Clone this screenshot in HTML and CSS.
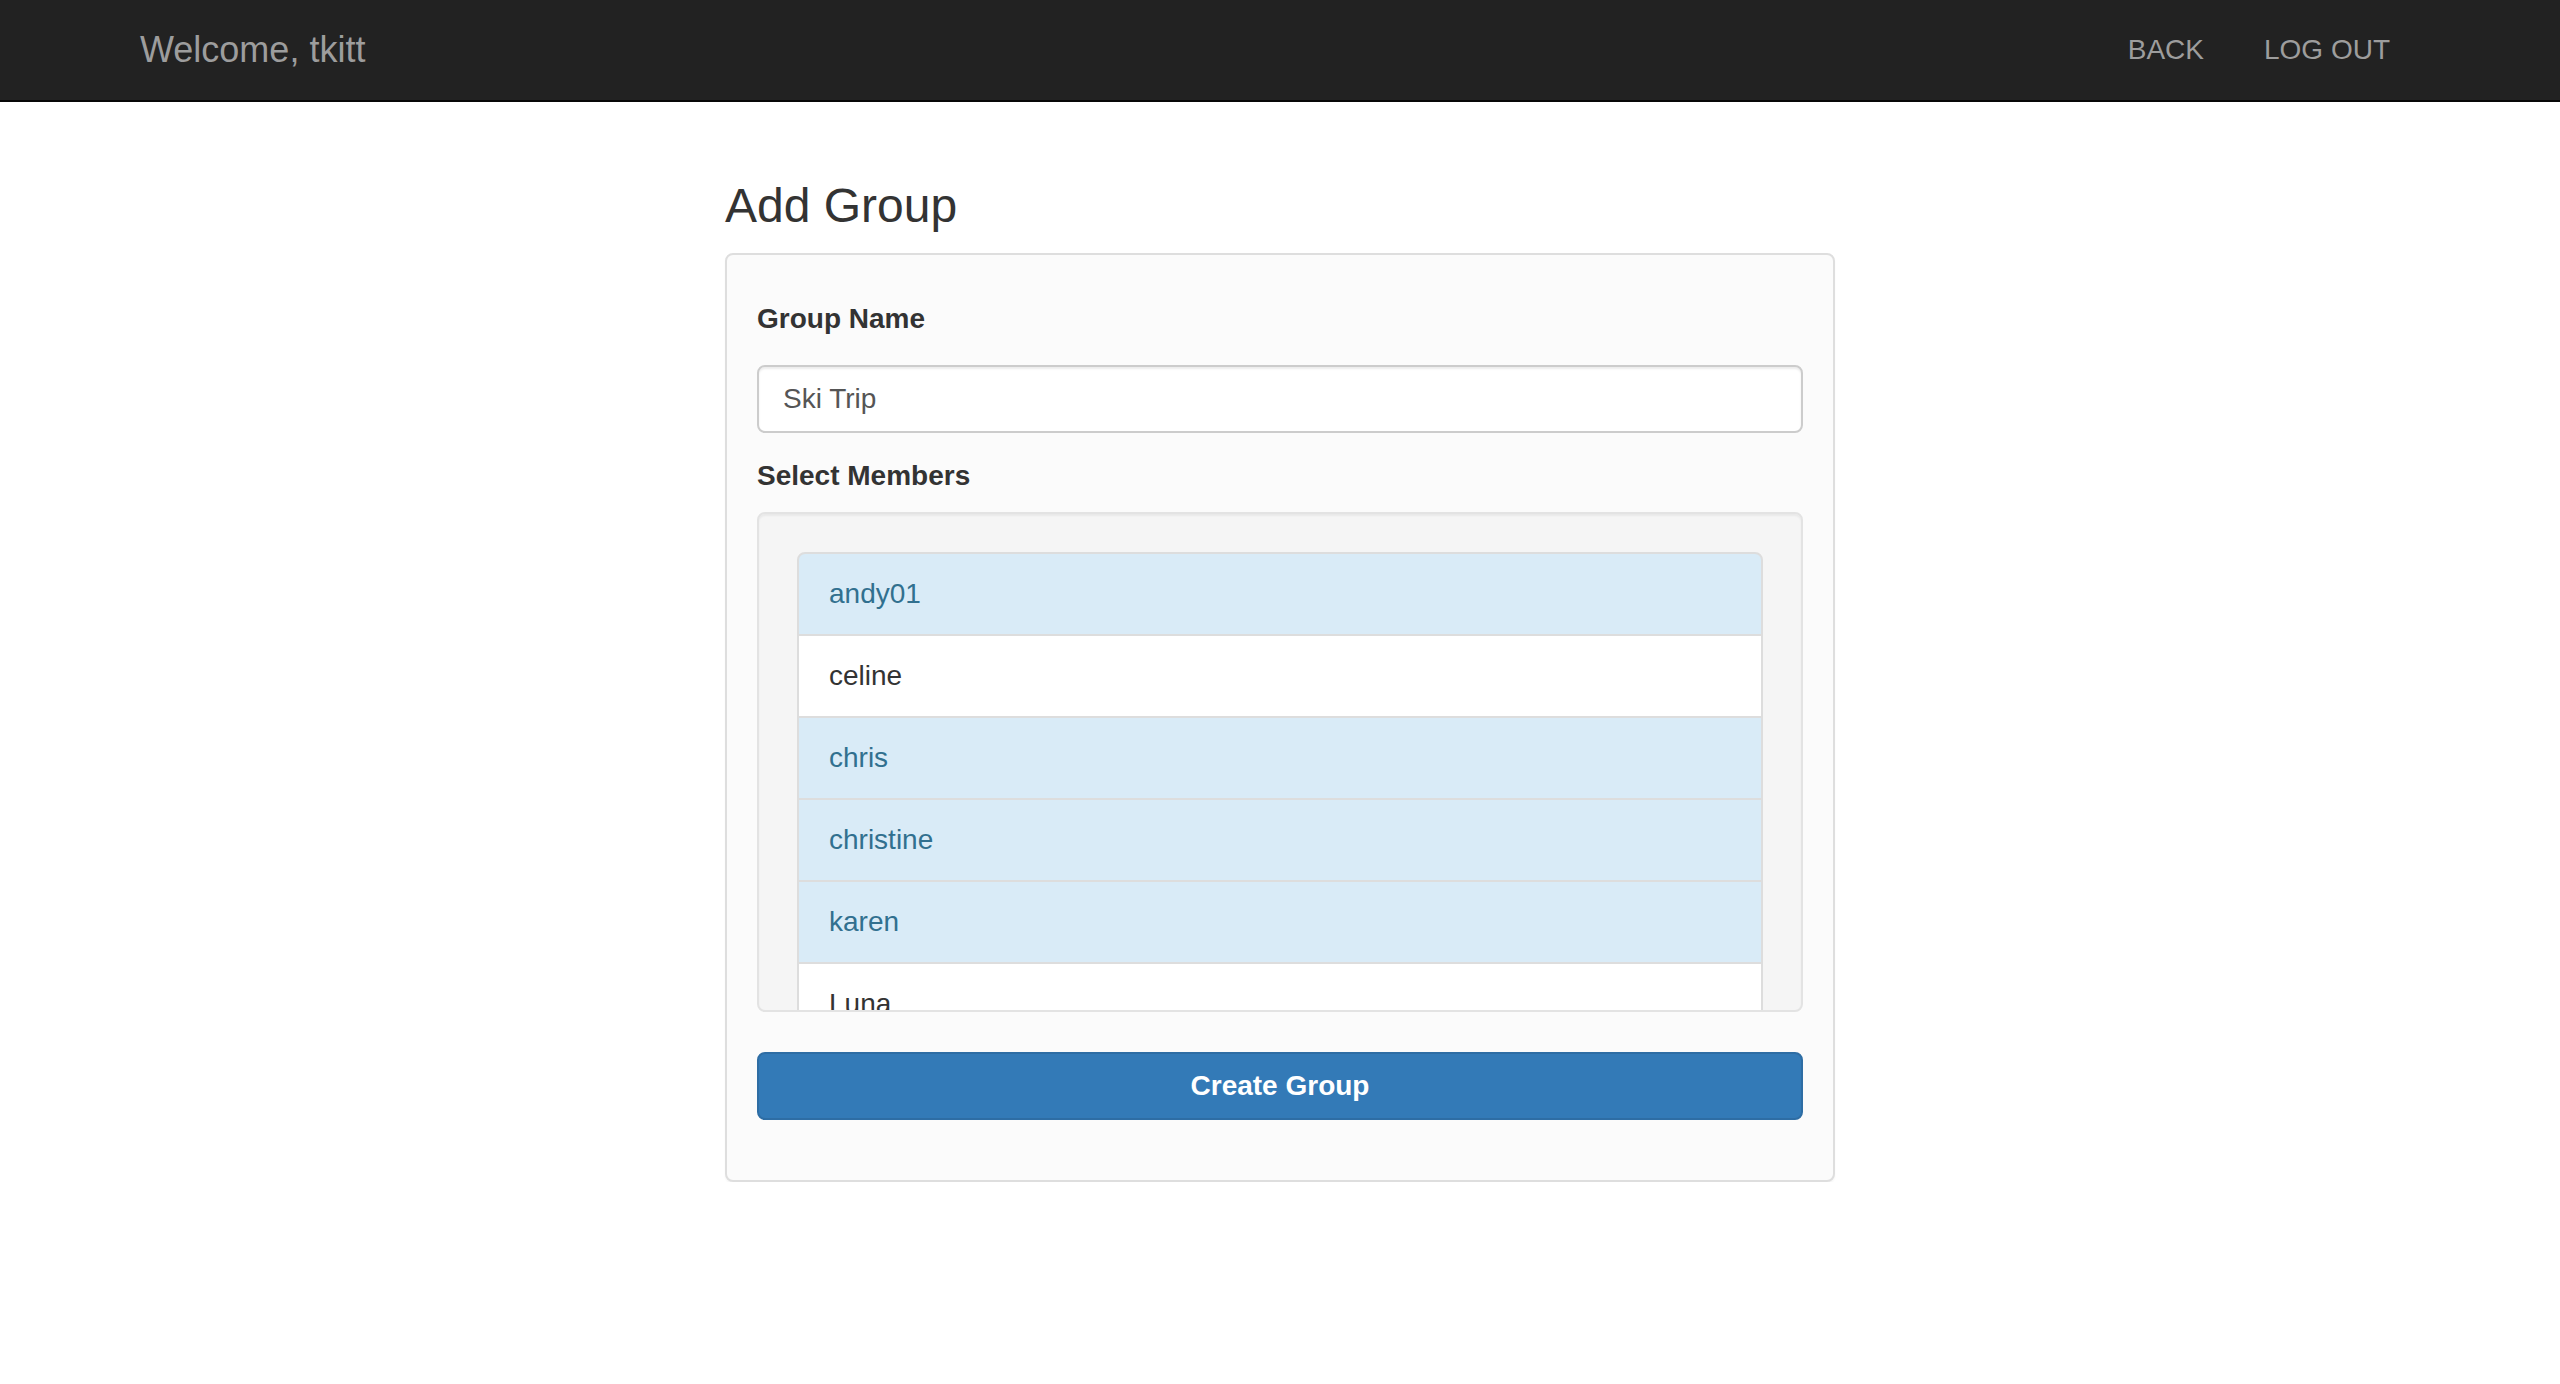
FILE: index.html
```html
<!DOCTYPE html>
<html lang="en">
<head>
<meta charset="utf-8">
<title>Add Group</title>
<link rel="stylesheet" href="styles.css">
</head>
<body>
<nav class="navbar">
  <div class="navbar-inner">
    <a class="brand" href="#">Welcome, tkitt</a>
    <ul class="nav-right">
      <li><a href="#">BACK</a></li>
      <li><a href="#">LOG OUT</a></li>
    </ul>
  </div>
</nav>
<main class="content">
  <div class="column">
    <h3 class="title">Add Group</h3>
    <form class="panel">
      <label class="label label-name">Group Name</label>
      <input class="input" type="text" value="Ski Trip">
      <label class="label label-members">Select Members</label>
      <div class="well">
        <ul class="list">
          <li class="item item-info">andy01</li>
          <li class="item">celine</li>
          <li class="item item-info">chris</li>
          <li class="item item-info">christine</li>
          <li class="item item-info">karen</li>
          <li class="item">Luna</li>
        </ul>
      </div>
      <button class="btn" type="button">Create Group</button>
    </form>
  </div>
</main>
</body>
</html>
```

FILE: styles.css
```css
* { box-sizing: border-box; }
html, body { margin: 0; padding: 0; }
body {
  background: #ffffff;
  font-family: "Liberation Sans", Arial, Helvetica, sans-serif;
  font-size: 28px;
  line-height: 40px;
  color: #333333;
}
a { text-decoration: none; }

.navbar {
  background: #222222;
  border-bottom: 2px solid #080808;
  height: 102px;
}
.navbar-inner {
  width: 2340px;
  margin: 0 auto;
  padding: 0 30px;
  display: flex;
  justify-content: space-between;
  align-items: flex-start;
}
.brand {
  display: block;
  margin-left: -30px;
  padding: 30px;
  height: 100px;
  font-size: 36px;
  line-height: 40px;
  color: #9d9d9d;
}
.nav-right {
  list-style: none;
  margin: 0;
  padding: 0;
  display: flex;
}
.nav-right a {
  display: block;
  padding: 30px;
  line-height: 40px;
  font-size: 28px;
  color: #9d9d9d;
}

.content { padding-top: 78px; }
.column {
  width: 1110px;
  margin: 0 auto;
}
.title {
  margin: 0 0 20px;
  font-size: 48px;
  line-height: 52.8px;
  font-weight: normal;
  color: #333333;
}
.panel {
  display: flex;
  flex-direction: column;
  margin: 0;
  padding: 44px 30px 60px;
  background: #fbfbfb;
  border: 2px solid #dedede;
  border-radius: 8px;
  box-shadow: 0 2px 2px rgba(0, 0, 0, 0.04);
}
.label {
  display: block;
  font-weight: bold;
  line-height: 40px;
  color: #333333;
}
.label-name { margin-bottom: 26px; }
.label-members { margin-bottom: 16px; }
.input {
  display: block;
  width: 100%;
  height: 68px;
  margin: 0 0 23px;
  padding: 0 24px;
  font-family: inherit;
  font-size: 28px;
  color: #555555;
  background: #ffffff;
  border: 2px solid #cccccc;
  border-radius: 8px;
  box-shadow: inset 0 2px 2px rgba(0, 0, 0, 0.075);
  outline: none;
}
.well {
  height: 500px;
  padding: 38px;
  background: #f5f5f5;
  border: 2px solid #e3e3e3;
  border-radius: 8px;
  box-shadow: inset 0 2px 2px rgba(0, 0, 0, 0.05);
  overflow-y: auto;
  scrollbar-width: none;
}
.well::-webkit-scrollbar { display: none; }
.list {
  list-style: none;
  margin: 0;
  padding: 0;
}
.item {
  padding: 20px 30px;
  line-height: 40px;
  background: #ffffff;
  border: 2px solid #dddddd;
  margin-bottom: -2px;
  color: #333333;
}
.item:first-child {
  border-top-left-radius: 8px;
  border-top-right-radius: 8px;
}
.item-info {
  background: #d9ebf7;
  color: #31708f;
}
.btn {
  display: block;
  width: 100%;
  height: 68px;
  margin-top: 40px;
  padding: 0 24px;
  font-family: inherit;
  font-size: 28px;
  font-weight: bold;
  line-height: 40px;
  color: #ffffff;
  background: #337ab7;
  border: 2px solid #2e6da4;
  border-radius: 8px;
  cursor: pointer;
}
```
